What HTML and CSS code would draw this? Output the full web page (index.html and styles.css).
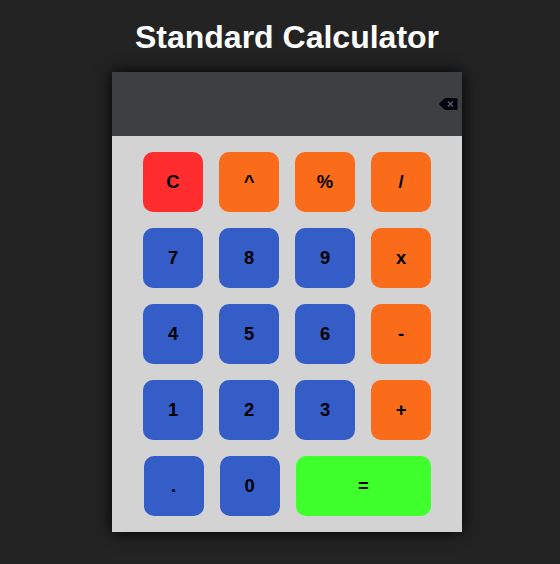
FILE: index.html
```html
<!DOCTYPE html>
<html lang="en">
<head>
<meta charset="utf-8">
<title>Standard Calculator</title>
<link rel="stylesheet" href="styles.css">
</head>
<body>
<main class="page">
  <h1 class="title">Standard Calculator</h1>
  <section class="calculator">
    <div class="display">
      <svg class="backspace" viewBox="0 0 19 12" width="19" height="12" aria-label="Backspace">
        <path class="backspace-body" d="M6.700 0H17Q18.600 0 18.600 1.600V10.400Q18.600 12 17 12H6.700Q6 12 5.500 11.500L.6 7Q-.2 6 .6 5L5.500.5Q6 0 6.700 0Z"/>
        <path class="backspace-cross" d="M9 3.500L14 8.500M14 3.500L9 8.500"/>
      </svg>
    </div>
    <div class="keys">
      <div class="row">
        <button class="key clear">C</button>
        <button class="key operator">^</button>
        <button class="key operator">%</button>
        <button class="key operator">/</button>
      </div>
      <div class="row">
        <button class="key">7</button>
        <button class="key">8</button>
        <button class="key">9</button>
        <button class="key operator">x</button>
      </div>
      <div class="row">
        <button class="key">4</button>
        <button class="key">5</button>
        <button class="key">6</button>
        <button class="key operator">-</button>
      </div>
      <div class="row">
        <button class="key">1</button>
        <button class="key">2</button>
        <button class="key">3</button>
        <button class="key operator">+</button>
      </div>
      <div class="row last">
        <button class="key">.</button>
        <button class="key">0</button>
        <button class="key equals">=</button>
      </div>
    </div>
  </section>
</main>
</body>
</html>
```
FILE: styles.css
```css
* {
  box-sizing: border-box;
}

body {
  margin: 0;
  height: 564px;
  overflow: hidden;
  background: #232323;
  font-family: "Liberation Sans", Arial, sans-serif;
}

.page {
  width: 350px;
  margin-left: 112px;
  padding-top: 19px;
}

.title {
  margin: 0 0 16px;
  font-size: 32px;
  line-height: 37px;
  font-weight: 700;
  text-align: center;
  white-space: nowrap;
  color: #fff;
}

.calculator {
  height: 460px;
  background: #d3d3d3;
  box-shadow: 0 0 15px #000;
}

.display {
  display: flex;
  align-items: center;
  justify-content: flex-end;
  height: 64px;
  padding-right: 4px;
  background: #3e3f40;
}

.backspace {
  display: block;
}

.backspace-body {
  fill: #02030f;
}

.backspace-cross {
  fill: none;
  stroke: #5a5a5c;
  stroke-width: 1.5;
}

.keys {
  display: flex;
  flex-direction: column;
  gap: 16px;
  padding: 16px 31px;
}

.row {
  display: flex;
  gap: 16px;
}

.last {
  padding-left: 0.5px;
}

.key {
  flex: none;
  width: 60px;
  height: 60px;
  padding: 0;
  border: 0;
  border-radius: 10px;
  background: #355dc8;
  color: #000;
  font: 700 18.4px "Liberation Sans", Arial, sans-serif;
}

.clear {
  background: #ff2d2d;
}

.operator {
  background: #fa6c1a;
}

.equals {
  width: 135.5px;
  background: #3fff2d;
}
```
